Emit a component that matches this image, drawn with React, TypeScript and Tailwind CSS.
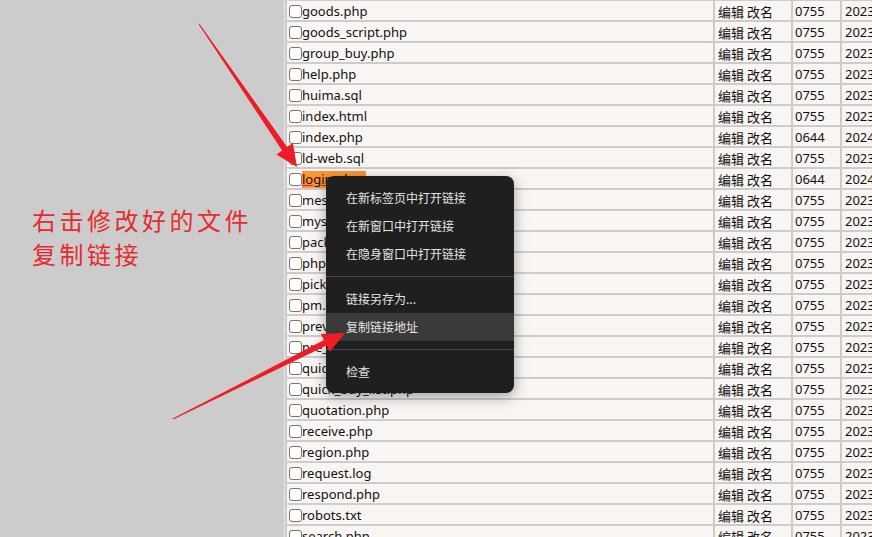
import { Fragment } from 'react'

interface FileRow {
  name: string
  mode: string
  year: string
}

const files: FileRow[] = [
  { name: 'goods.php', mode: '0755', year: '2023' },
  { name: 'goods_script.php', mode: '0755', year: '2023' },
  { name: 'group_buy.php', mode: '0755', year: '2023' },
  { name: 'help.php', mode: '0755', year: '2023' },
  { name: 'huima.sql', mode: '0755', year: '2023' },
  { name: 'index.html', mode: '0755', year: '2023' },
  { name: 'index.php', mode: '0644', year: '2024' },
  { name: 'ld-web.sql', mode: '0755', year: '2023' },
  { name: 'login.php', mode: '0644', year: '2024' },
  { name: 'message.php', mode: '0755', year: '2023' },
  { name: 'myship.php', mode: '0755', year: '2023' },
  { name: 'package.php', mode: '0755', year: '2023' },
  { name: 'phpinfo.php', mode: '0755', year: '2023' },
  { name: 'pick_out.php', mode: '0755', year: '2023' },
  { name: 'pm.php', mode: '0755', year: '2023' },
  { name: 'preview.php', mode: '0755', year: '2023' },
  { name: 'pre_sale.php', mode: '0755', year: '2023' },
  { name: 'quick_buy.php', mode: '0755', year: '2023' },
  { name: 'quick_buy_list.php', mode: '0755', year: '2023' },
  { name: 'quotation.php', mode: '0755', year: '2023' },
  { name: 'receive.php', mode: '0755', year: '2023' },
  { name: 'region.php', mode: '0755', year: '2023' },
  { name: 'request.log', mode: '0755', year: '2023' },
  { name: 'respond.php', mode: '0755', year: '2023' },
  { name: 'robots.txt', mode: '0755', year: '2023' },
  { name: 'search.php', mode: '0755', year: '2023' },
]

// cells are 19px tall, text sits a touch low like the original
const cell = 'bg-[#f8f5f2] h-[19px] pt-[2px] leading-[17px] whitespace-nowrap overflow-hidden'

function ContextMenu() {
  const item = 'h-[28px] leading-[28px] pl-[20px]'
  return (
    <div className="absolute left-[326px] top-[176px] w-[188px] pt-[8px] pb-[7px] rounded-[8px] bg-[#1f1f1f] text-[#e3e3e3] text-[12px] shadow-[0_4px_14px_rgba(0,0,0,0.35)] font-['Noto_Sans_CJK_SC',sans-serif]">
      <div className={item}>在新标签页中打开链接</div>
      <div className={item}>在新窗口中打开链接</div>
      <div className={item}>在隐身窗口中打开链接</div>
      <div className="h-[17px] flex items-center">
        <div className="w-full h-px bg-[#474747]" />
      </div>
      <div className={item}>链接另存为...</div>
      <div className={`${item} bg-[#3a3a3a]`}>复制链接地址</div>
      <div className="h-[17px] flex items-center">
        <div className="w-full h-px bg-[#474747]" />
      </div>
      <div className={item}>检查</div>
    </div>
  )
}

function Arrows() {
  return (
    <svg
      className="absolute inset-0 pointer-events-none"
      width="872"
      height="537"
      viewBox="0 0 872 537"
    >
      <polygon
        fill="#ee1c24"
        points="199.4,23.7 287.1,147.1 292.9,143.1 297,167 276.4,154.5 282.1,150.5 198.6,24.3"
      />
      <polygon
        fill="#ee1c24"
        points="173.2,419.4 326.6,345.5 329.8,351.7 345,333 320.8,333.9 324,340.1 172.8,418.6"
      />
    </svg>
  )
}

export default function App() {
  return (
    <div className="relative w-[872px] h-[537px] overflow-hidden flex bg-[#cccccc] font-['Noto_Sans','Noto_Sans_CJK_SC',sans-serif]">
      <div className="w-[284px] shrink-0 pt-[203px] pl-[32px] text-[24px] leading-[34px] tracking-[3.5px] text-[#e62a30] font-['Noto_Sans_CJK_SC',sans-serif]">
        <div>右击修改好的文件</div>
        <div>复制链接</div>
      </div>

      <div className="flex-1 border-l border-[#e6e6e6] pl-[2px] pt-[1px]">
        <div className="grid grid-cols-[426px_76px_47px_200px] gap-[2px] text-[13px] text-[#111]">
          {files.map((f) => (
            <Fragment key={f.name}>
              <div className={`${cell} flex items-center pl-[2px]`}>
                <span className="w-[13px] h-[13px] shrink-0 rounded-[3px] border border-[#767676] bg-white" />
                {f.name === 'login.php' ? (
                  <span className="bg-[#ff9632] pr-[6px] underline decoration-[#d42020]">{f.name}</span>
                ) : (
                  <span>{f.name}</span>
                )}
              </div>
              <div className={`${cell} pl-[3px] font-['Noto_Sans_CJK_SC',sans-serif]`}>编辑 改名</div>
              <div className={`${cell} pl-[2px]`}>{f.mode}</div>
              <div className={`${cell} pl-[3px]`}>{f.year}-08-16 10:22:31</div>
            </Fragment>
          ))}
        </div>
      </div>

      <ContextMenu />
      <Arrows />
    </div>
  )
}
